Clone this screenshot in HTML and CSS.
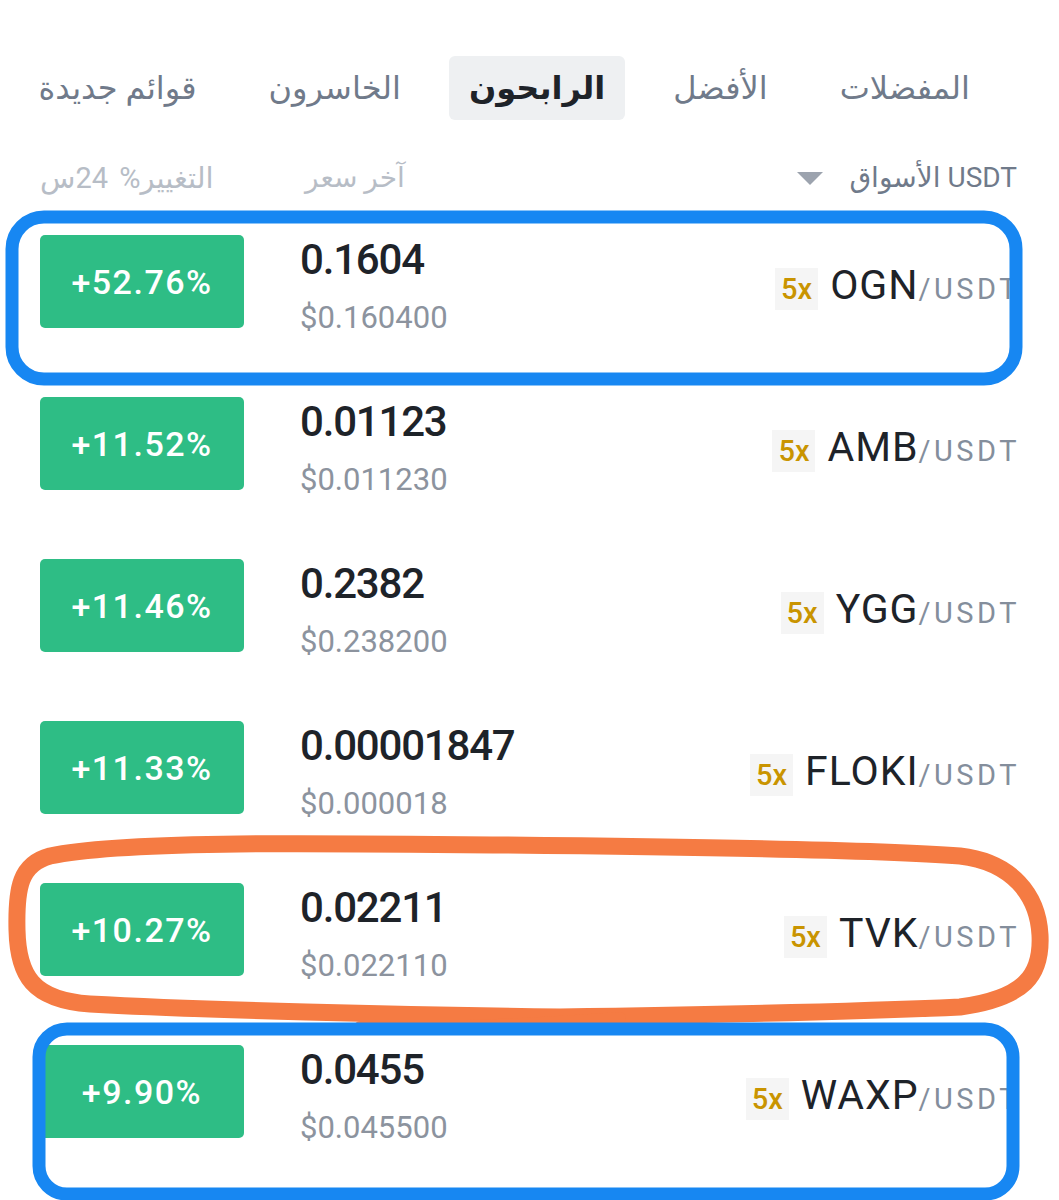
FILE: index.html
```html
<!DOCTYPE html>
<html lang="ar">
<head>
<meta charset="utf-8">
<title>Markets</title>
<link rel="stylesheet" href="styles.css">
</head>
<body>
<div class="page">
  <nav class="tabs" dir="rtl">
    <span class="tab">المفضلات</span>
    <span class="tab">الأفضل</span>
    <span class="tab active">الرابحون</span>
    <span class="tab">الخاسرون</span>
    <span class="tab">قوائم جديدة</span>
  </nav>

  <div class="list">
    <div class="head">
      <span class="h-change" dir="rtl">التغيير% 24س</span>
      <span class="h-price" dir="rtl">آخر سعر</span>
      <span class="h-market"><span class="caret"></span><span dir="rtl">USDT الأسواق</span></span>
    </div>

    <div class="row">
      <div class="chg">+52.76%</div>
      <div class="price"><div class="last">0.1604</div><div class="usd">$0.160400</div></div>
      <div class="pair"><span class="lev">5x</span><span class="base">OGN</span><span class="quote">/USDT</span></div>
    </div>
    <div class="row">
      <div class="chg">+11.52%</div>
      <div class="price"><div class="last">0.01123</div><div class="usd">$0.011230</div></div>
      <div class="pair"><span class="lev">5x</span><span class="base">AMB</span><span class="quote">/USDT</span></div>
    </div>
    <div class="row">
      <div class="chg">+11.46%</div>
      <div class="price"><div class="last">0.2382</div><div class="usd">$0.238200</div></div>
      <div class="pair"><span class="lev">5x</span><span class="base">YGG</span><span class="quote">/USDT</span></div>
    </div>
    <div class="row">
      <div class="chg">+11.33%</div>
      <div class="price"><div class="last">0.00001847</div><div class="usd">$0.000018</div></div>
      <div class="pair"><span class="lev">5x</span><span class="base">FLOKI</span><span class="quote">/USDT</span></div>
    </div>
    <div class="row">
      <div class="chg">+10.27%</div>
      <div class="price"><div class="last">0.02211</div><div class="usd">$0.022110</div></div>
      <div class="pair"><span class="lev">5x</span><span class="base">TVK</span><span class="quote">/USDT</span></div>
    </div>
    <div class="row">
      <div class="chg">+9.90%</div>
      <div class="price"><div class="last">0.0455</div><div class="usd">$0.045500</div></div>
      <div class="pair"><span class="lev">5x</span><span class="base">WAXP</span><span class="quote">/USDT</span></div>
    </div>
  </div>

  <svg class="marks" width="1059" height="1200" viewBox="0 0 1059 1200" aria-hidden="true">
    <rect class="mark-blue" x="12" y="217" width="1004" height="162" rx="32"/>
    <path class="mark-orange" d="M 50 856 C 120 841, 300 843, 500 845 C 700 847, 880 850, 960 856 C 1012 862, 1038 895, 1040 935 C 1042 975, 1025 998, 960 1007 C 850 1012, 700 1015, 560 1017 C 400 1015, 200 1010, 90 1004 C 32 1000, 18 975, 17 930 C 16 888, 20 864, 50 856 Z"/>
    <path class="mark-orange thin" d="M 620 1018 C 540 1024, 440 1028, 360 1027"/>
    <rect class="mark-blue" x="39" y="1029" width="974" height="165" rx="28"/>
  </svg>
</div>
</body>
</html>
```
FILE: styles.css
```css
html, body {
  margin: 0;
  padding: 0;
  background: #ffffff;
}

body {
  font-family: "Roboto", "DejaVu Sans", sans-serif;
  color: #1e2329;
}

.page {
  position: relative;
  width: 1059px;
  height: 1200px;
  overflow: hidden;
}

/* Tabs */
.tabs {
  display: flex;
  gap: 24px;
  padding: 56px 65px 0 0;
  height: 64px;
}

.tab {
  display: flex;
  align-items: center;
  padding: 0 24px;
  height: 64px;
  border-radius: 6px;
  font-size: 32px;
  color: #707a8a;
  white-space: nowrap;
}

.tab.active {
  padding: 0 20px;
  background: #eef0f2;
  color: #1e2329;
  font-weight: 700;
}

/* List */
.list {
  padding: 0 42px 0 40px;
}

.head {
  display: grid;
  grid-template-columns: 204px 1fr auto;
  column-gap: 56px;
  align-items: center;
  height: 81px;
  box-sizing: border-box;
  padding-top: 34px;
  font-size: 28px;
  color: #b7bdc6;
}

.h-change {
  justify-self: start;
  white-space: nowrap;
  font-size: 29px;
  word-spacing: 4px;
}

.h-price {
  justify-self: start;
  padding-left: 5px;
}

.h-market {
  display: flex;
  align-items: center;
  gap: 26px;
  color: #707a8a;
}

.caret {
  width: 0;
  height: 0;
  border-left: 13px solid transparent;
  border-right: 13px solid transparent;
  border-top: 13px solid #9ca3ae;
  margin-top: 2px;
}

.row {
  display: grid;
  grid-template-columns: 204px 1fr auto;
  column-gap: 56px;
  height: 162px;
  box-sizing: border-box;
  padding-top: 34px;
  align-items: start;
}

.chg {
  height: 93px;
  border-radius: 5px;
  background: #2ebd85;
  color: #ffffff;
  font-size: 34px;
  font-weight: 500;
  letter-spacing: 1.5px;
  display: flex;
  align-items: center;
  justify-content: center;
}

.price {
  margin-top: 3px;
}

.last {
  font-size: 42px;
  line-height: 44px;
  font-weight: 500;
  letter-spacing: -1.2px;
  color: #1e2329;
}

.usd {
  margin-top: 16px;
  font-size: 31px;
  line-height: 40px;
  color: #8c939e;
}

.pair {
  align-self: center;
  margin-bottom: 28px;
  display: flex;
  align-items: baseline;
}

.lev {
  display: flex;
  align-items: center;
  justify-content: center;
  width: 43px;
  height: 42px;
  background: #f5f5f5;
  color: #c99400;
  font-size: 29px;
  font-weight: 500;
  margin-right: 12px;
}

.base {
  font-size: 41px;
  letter-spacing: 1px;
  font-weight: 400;
  color: #1e2329;
}

.quote {
  font-size: 29px;
  letter-spacing: 3.5px;
  color: #848e9c;
  margin-right: -3px;
}

/* Hand-drawn annotations laid over the list */
.marks {
  position: absolute;
  top: 0;
  left: 0;
  pointer-events: none;
}

.mark-blue {
  fill: none;
  stroke: #1787f2;
  stroke-width: 13;
}

.mark-orange {
  fill: none;
  stroke: #f57b43;
  stroke-width: 17;
  stroke-linejoin: round;
  stroke-linecap: round;
}

.mark-orange.thin {
  stroke-width: 12;
}
```
